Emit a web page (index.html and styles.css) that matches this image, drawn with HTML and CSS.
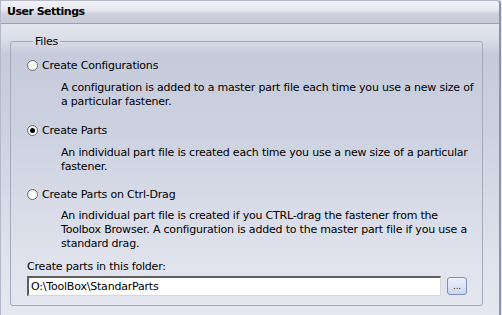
FILE: index.html
```html
<!DOCTYPE html>
<html>
<head>
<meta charset="utf-8">
<link rel="stylesheet" href="styles.css">
</head>
<body>
<div class="panel">
  <div class="header">User Settings</div>
  <div class="body">
    <fieldset class="group">
      <legend>Files</legend>
      <div class="option">
        <div class="radio-row"><span class="radio"></span><span>Create Configurations</span></div>
        <p class="desc">A configuration is added to a master part file each time you use a new size of a particular fastener.</p>
      </div>
      <div class="option">
        <div class="radio-row"><span class="radio checked"></span><span>Create Parts</span></div>
        <p class="desc">An individual part file is created each time you use a new size of a particular fastener.</p>
      </div>
      <div class="option last">
        <div class="radio-row"><span class="radio"></span><span>Create Parts on Ctrl-Drag</span></div>
        <p class="desc">An individual part file is created if you CTRL-drag the fastener from the Toolbox Browser. A configuration is added to the master part file if you use a standard drag.</p>
      </div>
      <div class="folder-label">Create parts in this folder:</div>
      <div class="folder-row">
        <div class="input">O:\ToolBox\StandarParts</div>
        <div class="browse">...</div>
      </div>
    </fieldset>
  </div>
</div>
</body>
</html>
```
FILE: styles.css
```css
html, body {
  margin: 0;
  padding: 0;
  background: #e6e9f1;
}
body {
  font-family: "DejaVu Sans", Tahoma, sans-serif;
  font-size: 11px;
  letter-spacing: -0.2px;
  color: #000;
  width: 502px;
  height: 315px;
  overflow: hidden;
}
.panel {
  width: 501px;
  height: 330px;
  border-left: 1px solid #b4b8c9;
  border-top: 1px solid #b4b8c9;
  border-right: 2px solid #8d92ab;
  border-top-right-radius: 4px;
  box-sizing: border-box;
  display: flex;
  flex-direction: column;
}
.header {
  height: 23px;
  box-sizing: border-box;
  border-bottom: 1px solid #9a9fb5;
  background: linear-gradient(#f3f4f7 0%, #e6e8ee 40%, #cdd0dc 60%, #c9ccd8 100%);
  font-weight: bold;
  letter-spacing: -0.5px;
  padding: 4px 0 0 6px;
  border-top-right-radius: 4px;
}
.body {
  flex: 1;
  background: linear-gradient(#e1e4ec 0px, #dcdfe9 14px, #c6cbdc 30px, #cdd2e1 110px, #dfe2ec 230px, #e6e9f1 300px);
  padding: 11px 16px 0 9px;
}
.group {
  margin: 0;
  padding: 0 7px 7px 16px;
  border: 1px solid #a3a8bb;
  border-radius: 3px;
  height: 271px;
  box-sizing: border-box;
}
legend {
  padding: 0 2px;
  margin-left: 6px;
  line-height: 13px;
}
.radio-row {
  display: flex;
  align-items: center;
  height: 14px;
  margin-top: 10px;
}
.option + .option .radio-row {
  margin-top: 14px;
}
.option.last .radio-row {
  margin-top: 13px;
}
.radio {
  width: 11px;
  height: 11px;
  box-sizing: border-box;
  border: 1px solid #6d6d6d;
  border-radius: 50%;
  background: radial-gradient(circle at 60% 60%, #ffffff 40%, #e2e2e2 100%);
  margin-right: 4px;
  display: flex;
  align-items: center;
  justify-content: center;
}
.radio.checked::after {
  content: "";
  width: 5px;
  height: 5px;
  border-radius: 50%;
  background: #000;
}
.desc {
  margin: 9px 0 0 34px;
  line-height: 14px;
}
.option.last .desc {
  margin-top: 8px;
}
.folder-label {
  margin-top: 9px;
  line-height: 14px;
}
.folder-row {
  display: flex;
  align-items: center;
  margin-top: 2px;
}
.input {
  width: 414px;
  height: 20px;
  box-sizing: border-box;
  border-top: 2px solid #5f5f5f;
  border-left: 2px solid #5f5f5f;
  border-right: 1px solid #d8d8d8;
  border-bottom: 1px solid #d8d8d8;
  background: #fff;
  padding: 1px 0 0 2px;
  line-height: 16px;
  flex: none;
}
.browse {
  width: 20px;
  height: 18px;
  box-sizing: border-box;
  margin-left: 6px;
  border: 1px solid #7d8fbd;
  border-radius: 3px;
  background: linear-gradient(#eef2fb, #cdd6ee);
  font-size: 9px;
  text-align: center;
  line-height: 16px;
  color: #333;
  flex: none;
}
```
